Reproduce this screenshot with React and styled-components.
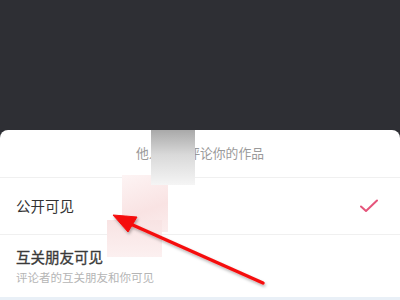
import React from "react"
import styled, { createGlobalStyle } from "styled-components"

const Global = createGlobalStyle`
  html, body {
    margin: 0;
    padding: 0;
    background: #2e2f34;
  }
  body {
    font-family: "Noto Sans CJK SC", "Noto Sans", sans-serif;
  }
`

const Page = styled.div`
  position: relative;
  width: 400px;
  height: 300px;
  overflow: hidden;
  display: flex;
  flex-direction: column;
`

const Backdrop = styled.div`
  height: 130px;
  flex: none;
  background: #2e2f34;
`

const Sheet = styled.div`
  flex: 1;
  background: #fff;
  border-radius: 8px 8px 0 0;
  display: flex;
  flex-direction: column;
`

const Header = styled.div`
  height: 48px;
  display: flex;
  align-items: center;
  justify-content: center;
  font-size: 12.8px;
  color: #9a9a9a;
  border-bottom: 1px solid #f0f0f0;
  box-sizing: border-box;
  padding-bottom: 2px;
`

const Row = styled.div`
  height: ${({ h }) => h}px;
  box-sizing: border-box;
  padding: 0 22px 0 16px;
  display: flex;
  align-items: center;
  justify-content: space-between;
  border-bottom: 1px solid ${({ last }) => (last ? "#e9f0f7" : "#f0f0f0")};
  ${({ last }) => last && "border-bottom-width: 3px;"}
`

const Texts = styled.div`
  display: flex;
  flex-direction: column;
`

const Title = styled.div`
  font-size: 14.5px;
  line-height: 20px;
  color: ${({ bold }) => (bold ? "#3a3a3a" : "#333")};
  font-weight: 400;
  ${({ bold }) => bold && "-webkit-text-stroke: 0.35px #3a3a3a;"}
`

const Sub = styled.div`
  font-size: 11.5px;
  line-height: 16px;
  color: #b5b5b5;
  margin-top: 2px;
`

const Mosaic = styled.div`
  position: absolute;
  left: ${({ x }) => x}px;
  top: ${({ y }) => y}px;
  width: ${({ w }) => w}px;
  height: ${({ h }) => h}px;
  background: ${({ bg }) => bg};
`

const Overlay = styled.svg`
  position: absolute;
  left: 0;
  top: 0;
  pointer-events: none;
`

const Check = () => (
  <svg width="18" height="14" viewBox="0 0 18 14">
    <path
      d="M1 7.5 L6 12 L17 1.5"
      fill="none"
      stroke="#e5557b"
      strokeWidth="2"
      strokeLinecap="round"
      strokeLinejoin="round"
    />
  </svg>
)

export default function App() {
  return (
    <>
      <Global />
      <Page>
        <Backdrop />
        <Sheet>
          <Header>他人可以评论你的作品</Header>
          <Row h={57}>
            <Title>公开可见</Title>
            <Check />
          </Row>
          <Row h={65} last>
            <Texts>
              <Title bold>互关朋友可见</Title>
              <Sub>评论者的互关朋友和你可见</Sub>
            </Texts>
          </Row>
        </Sheet>

        <Mosaic
          x={122}
          y={175}
          w={46}
          h={57}
          bg="linear-gradient(160deg, #fdf4f4 0%, #f9e3e3 60%, #fbeded 100%)"
        />
        <Mosaic
          x={107}
          y={220}
          w={55}
          h={37}
          bg="linear-gradient(180deg, #f8e3e3 0%, #fcf0f0 100%)"
        />
        <Mosaic
          x={151}
          y={130}
          w={44}
          h={55}
          bg="linear-gradient(180deg, #a9a9a9 0%, #d9d9d9 45%, #f5f5f5 100%)"
        />

        <Overlay width="400" height="300" viewBox="0 0 400 300">
          <defs>
            <filter id="sh" x="-20%" y="-20%" width="140%" height="140%">
              <feDropShadow dx="1" dy="2" stdDeviation="1.5" floodColor="#000" floodOpacity="0.3" />
            </filter>
          </defs>
          <g filter="url(#sh)" fill="#f51010" stroke="#f51010">
            <line x1="263" y1="283" x2="126" y2="222" strokeWidth="3.5" strokeLinecap="round" />
            <polygon points="113,215 137,217 128,232" strokeWidth="1" strokeLinejoin="round" />
          </g>
        </Overlay>
      </Page>
    </>
  )
}
